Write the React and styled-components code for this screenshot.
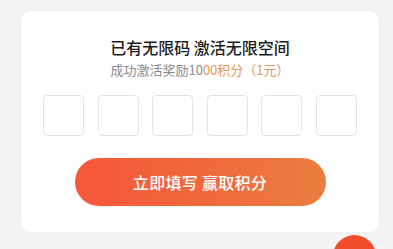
import React from 'react';
import styled, { createGlobalStyle } from 'styled-components';

const GlobalStyles = createGlobalStyle`
  html, body {
    margin: 0;
    padding: 0;
    background: #f4f4f6;
    font-family: "Noto Sans CJK SC", "Noto Sans", sans-serif;
  }
`;

const Page = styled.div`
  position: relative;
  width: 393px;
  height: 249px;
  overflow: hidden;
  padding: 11px 14px 0 21px;
  box-sizing: border-box;
`;

const Card = styled.div`
  width: 358px;
  box-sizing: border-box;
  padding: 25px 0 26px;
  background: #ffffff;
  border-radius: 10px;
  box-shadow: 0 0 4px rgba(0, 0, 0, 0.03);
  display: flex;
  flex-direction: column;
  align-items: center;
`;

const Title = styled.h1`
  margin: 0;
  font-size: 16px;
  line-height: 22px;
  font-weight: 500;
  color: #1c1c1c;
`;

const Subtitle = styled.p`
  margin: 3px 0 0;
  font-size: 13px;
  line-height: 18px;
  color: #8a8a8a;
`;

const Highlight = styled.span`
  color: #e39556;
`;

const CodeRow = styled.div`
  margin-top: 16px;
  display: flex;
  gap: 13.5px;
`;

const CodeBox = styled.div`
  width: 41px;
  height: 41px;
  box-sizing: border-box;
  border: 1px solid #e4e4e6;
  border-radius: 4px;
  background: #fff;
`;

const SubmitButton = styled.button`
  margin-top: 22px;
  width: 251px;
  height: 48px;
  border: none;
  border-radius: 24px;
  background: linear-gradient(90deg, #f7563a 0%, #f0683c 50%, #ea7e40 100%);
  color: #fff;
  font-family: inherit;
  font-size: 16px;
  font-weight: 500;
  letter-spacing: 0.3px;
  cursor: pointer;
`;

const FloatingDot = styled.div`
  position: absolute;
  left: 333px;
  top: 235px;
  width: 43px;
  height: 43px;
  border-radius: 50%;
  background: #f14c2c;
`;

export default function App() {
  return (
    <>
      <GlobalStyles />
      <Page>
        <Card>
          <Title>已有无限码 激活无限空间</Title>
          <Subtitle>
            成功激活奖励10<Highlight>00积分（1元）</Highlight>
          </Subtitle>
          <CodeRow>
            {[0, 1, 2, 3, 4, 5].map((i) => (
              <CodeBox key={i} />
            ))}
          </CodeRow>
          <SubmitButton>立即填写 赢取积分</SubmitButton>
        </Card>
        <FloatingDot />
      </Page>
    </>
  );
}
